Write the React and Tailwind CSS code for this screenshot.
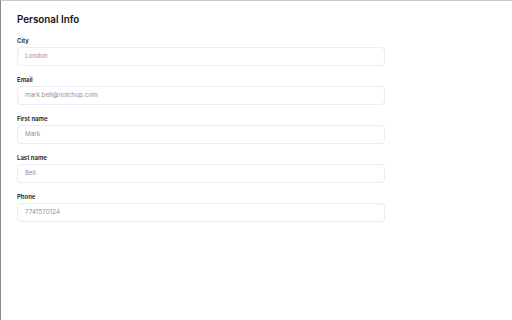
import React from 'react';

const fields = [
  { label: 'City', value: 'London' },
  { label: 'Email', value: 'mark.bell@notchup.com' },
  { label: 'First name', value: 'Mark' },
  { label: 'Last name', value: 'Bell' },
  { label: 'Phone', value: '7741570124' },
];

const Field = ({ label, value }) => (
  <div className="flex flex-col mb-[10px]">
    <label className="text-[6px] leading-[8px] font-semibold text-[#111827] mb-[2px]">{label}</label>
    <div className="w-[368px] h-[19px] rounded-[4px] border border-[#ebe9fa] flex items-center px-[7px] text-[6.3px] text-[#8f8e9e]">
      {value}
    </div>
  </div>
);

export default function App() {
  return (
    <div
      className="w-[512px] h-[320px] bg-white border-t border-t-[#c8c8c8] border-l border-l-[#8a8a8a] overflow-hidden"
      style={{ fontFamily: 'Inter, "Noto Sans", sans-serif' }}
    >
      <div className="pl-4 pt-[12px]">
        <h1 className="text-[9.8px] leading-[14px] font-semibold text-[#111] mb-[10px]">Personal Info</h1>
        {fields.map((f) => (
          <Field key={f.label} {...f} />
        ))}
      </div>
    </div>
  );
}
